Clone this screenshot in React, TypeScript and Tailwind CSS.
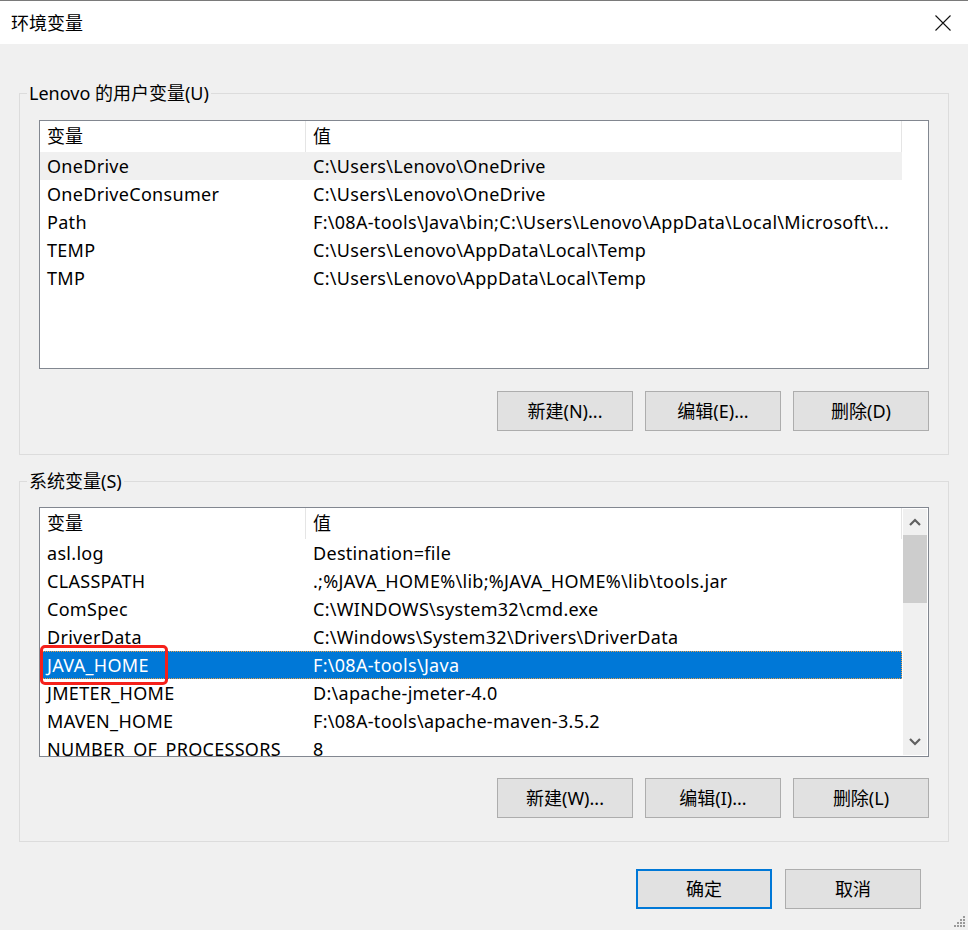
import React from 'react';

const font = { fontFamily: '"Noto Sans", "Noto Sans CJK SC", sans-serif' };

type Row = { name: string; value: string };

const userVars: Row[] = [
  { name: 'OneDrive', value: 'C:\\Users\\Lenovo\\OneDrive' },
  { name: 'OneDriveConsumer', value: 'C:\\Users\\Lenovo\\OneDrive' },
  { name: 'Path', value: 'F:\\08A-tools\\Java\\bin;C:\\Users\\Lenovo\\AppData\\Local\\Microsoft\\...' },
  { name: 'TEMP', value: 'C:\\Users\\Lenovo\\AppData\\Local\\Temp' },
  { name: 'TMP', value: 'C:\\Users\\Lenovo\\AppData\\Local\\Temp' },
];

const sysVars: Row[] = [
  { name: 'asl.log', value: 'Destination=file' },
  { name: 'CLASSPATH', value: '.;%JAVA_HOME%\\lib;%JAVA_HOME%\\lib\\tools.jar' },
  { name: 'ComSpec', value: 'C:\\WINDOWS\\system32\\cmd.exe' },
  { name: 'DriverData', value: 'C:\\Windows\\System32\\Drivers\\DriverData' },
  { name: 'JAVA_HOME', value: 'F:\\08A-tools\\Java' },
  { name: 'JMETER_HOME', value: 'D:\\apache-jmeter-4.0' },
  { name: 'MAVEN_HOME', value: 'F:\\08A-tools\\apache-maven-3.5.2' },
  { name: 'NUMBER_OF_PROCESSORS', value: '8' },
];

function Button({ label, primary }: { label: string; primary?: boolean }) {
  return (
    <div
      className={
        'w-[136px] h-[40px] flex items-center justify-center bg-[#e1e1e1] text-[18px] text-black ' +
        (primary ? 'border-2 border-[#0078d7]' : 'border border-[#adadad]')
      }
    >
      {label}
    </div>
  );
}

function ListRow({ row, state }: { row: Row; state?: 'hover' | 'selected' }) {
  const bg =
    state === 'selected'
      ? 'bg-[#0078d7] text-white outline-1 outline-dotted outline-[#e9a04a] -outline-offset-1'
      : state === 'hover'
        ? 'bg-[#f0f0f0] text-black'
        : 'text-black';
  return (
    <div className={'h-[28px] w-[862px] flex items-center shrink-0 tracking-[0.3px] ' + bg}>
      <div className="w-[266px] pl-[7px] whitespace-nowrap overflow-hidden">{row.name}</div>
      <div className="w-[596px] pl-[7px] whitespace-nowrap overflow-hidden">{row.value}</div>
    </div>
  );
}

function ListHeader() {
  return (
    <div className="h-[31px] w-[862px] flex items-center shrink-0">
      <div className="w-[266px] pl-[7px] h-full flex items-center border-r border-[#e5e5e5]">变量</div>
      <div className="w-[596px] pl-[7px] h-full flex items-center border-r border-[#e5e5e5]">值</div>
    </div>
  );
}

function Chevron({ up }: { up?: boolean }) {
  return (
    <svg width="12" height="8" viewBox="0 0 12 8" className="block">
      <path d={up ? 'M1 7 L6 2 L11 7' : 'M1 1 L6 6 L11 1'} fill="none" stroke="#606060" strokeWidth="2.2" />
    </svg>
  );
}

function GroupBox({ legend, children }: { legend: string; children: React.ReactNode }) {
  return (
    <div className="relative border border-[#dcdcdc] px-[19px]">
      <span className="absolute -top-[13px] left-[7px] px-[2px] bg-[#f0f0f0] text-[18px] leading-[24px]">{legend}</span>
      {children}
    </div>
  );
}

export default function App() {
  return (
    <div className="w-[968px] h-[930px] bg-[#f0f0f0] text-[18px] text-black relative overflow-hidden" style={font}>
      <div className="h-[44px] bg-white border-t border-[#7a7a7a] flex items-center justify-between pl-[11px] pr-[17px]">
        <span className="text-[18px] leading-none">环境变量</span>
        <svg width="16" height="16" viewBox="0 0 16 16">
          <path d="M0.5 0.5 L15.5 15.5 M15.5 0.5 L0.5 15.5" stroke="#111" strokeWidth="1.1" />
        </svg>
      </div>

      <div className="px-[19px] pt-[49px]">
        <GroupBox legend="Lenovo 的用户变量(U)">
          <div className="mt-[26px] h-[249px] border border-[#828790] bg-white flex flex-col overflow-hidden">
            <ListHeader />
            {userVars.map((r, i) => (
              <ListRow key={r.name} row={r} state={i === 0 ? 'hover' : undefined} />
            ))}
          </div>
          <div className="flex justify-end gap-[12px] mt-[22px] mb-[23px]">
            <Button label="新建(N)..." />
            <Button label="编辑(E)..." />
            <Button label="删除(D)" />
          </div>
        </GroupBox>

        <div className="h-[26px]" />

        <GroupBox legend="系统变量(S)">
          <div className="mt-[25px] h-[250px] border border-[#828790] bg-white flex overflow-hidden relative">
            <div className="flex flex-col overflow-hidden">
              <ListHeader />
              {sysVars.map((r) => (
                <ListRow key={r.name} row={r} state={r.name === 'JAVA_HOME' ? 'selected' : undefined} />
              ))}
            </div>
            <div className="ml-[1px] w-[24px] h-[246px] mt-[1px] bg-[#f0f0f0] flex flex-col items-stretch">
              <div className="h-[26px] flex items-center justify-center">
                <Chevron up />
              </div>
              <div className="h-[68px] bg-[#cdcdcd]" />
              <div className="flex-1" />
              <div className="h-[26px] flex items-center justify-center">
                <Chevron />
              </div>
            </div>
            {/* red annotation */}
            <div className="absolute left-0 top-[137px] w-[128px] h-[40px] border-[3px] border-[#f5201a] rounded-[5px]" />
          </div>
          <div className="flex justify-end gap-[12px] mt-[21px] mb-[23px]">
            <Button label="新建(W)..." />
            <Button label="编辑(I)..." />
            <Button label="删除(L)" />
          </div>
        </GroupBox>

        <div className="flex justify-end gap-[13px] pr-[28px] mt-[27px]">
          <Button label="确定" primary />
          <Button label="取消" />
        </div>
      </div>

      <svg className="absolute right-[2px] bottom-[2px]" width="12" height="12" viewBox="0 0 12 12">
        {[
          [9, 0], [6, 3], [9, 3], [3, 6], [6, 6], [9, 6], [0, 9], [3, 9], [6, 9], [9, 9],
        ].map(([x, y]) => (
          <rect key={x + '-' + y} x={x} y={y} width="2" height="2" fill="#9a9a9a" />
        ))}
      </svg>
    </div>
  );
}
